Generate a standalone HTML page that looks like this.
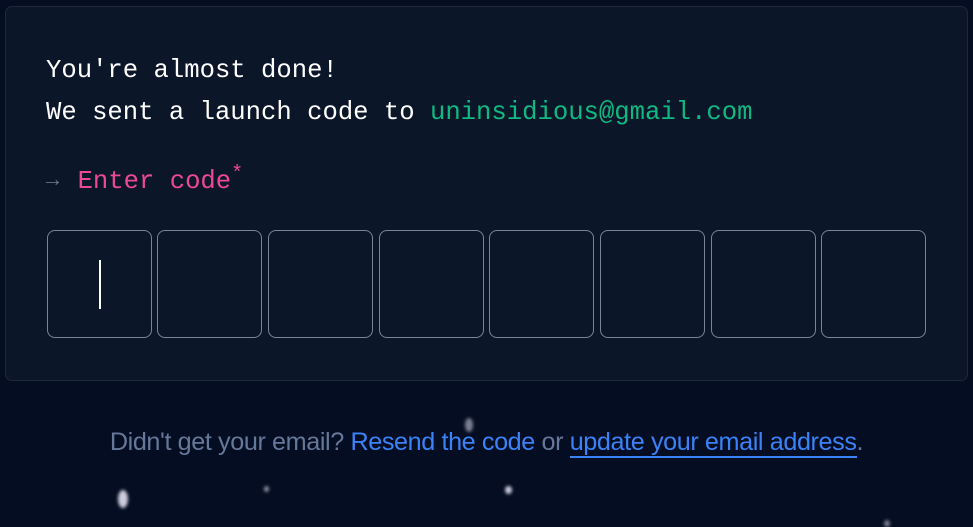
<!DOCTYPE html>
<html><head><style>
html,body{margin:0;padding:0;width:973px;height:527px;background:#050d22;overflow:hidden;position:relative}
.card{position:absolute;left:5px;top:6px;width:963px;height:375px;background:#0c1629;border:1px solid #1e293b;border-radius:7px;box-sizing:border-box}
.mono{font-family:"Liberation Mono",monospace;font-size:25.6px;position:absolute;left:46px;white-space:pre;color:#fff}
.box{position:absolute;top:230px;width:105px;height:108px;border:1px solid #7b8494;border-radius:8px;box-sizing:border-box}
.foot{position:absolute;top:428px;left:0;width:973px;text-align:center;font-family:"Liberation Sans",sans-serif;font-size:25.2px;color:#66789a;letter-spacing:-0.4px}
.foot a{color:#3b82f6;text-decoration:none}
.star{position:absolute;border-radius:50%;background:#ccd;filter:blur(1.5px)}
</style></head><body>
<div class="star" style="left:118px;top:490px;width:10px;height:18px"></div>
<div class="star" style="left:465px;top:418px;width:8px;height:14px;opacity:.6"></div>
<div class="star" style="left:264px;top:486px;width:5px;height:6px;opacity:.7"></div>
<div class="star" style="left:505px;top:486px;width:7px;height:8px"></div>
<div class="star" style="left:884px;top:520px;width:6px;height:7px;opacity:.6"></div>
<div class="card"></div>
<div class="mono" style="top:56px">You're almost done!</div>
<div class="mono" style="top:98px">We sent a launch code to <span style="color:#10b981">uninsidious@gmail.com</span></div>
<div class="mono" style="top:167px;color:#ec4899"><span style="color:#64748b;font-size:22px;position:relative;top:-2px">→</span>&nbsp;<span style="margin-left:3px">Enter code</span><span style="font-size:20px;position:relative;top:-9px">*</span></div>
<div class="box" style="left:47px"><div style="position:absolute;left:51px;top:29px;width:2px;height:49px;background:#fff"></div></div>
<div class="box" style="left:157px"></div>
<div class="box" style="left:268px"></div>
<div class="box" style="left:379px"></div>
<div class="box" style="left:489px"></div>
<div class="box" style="left:600px"></div>
<div class="box" style="left:711px"></div>
<div class="box" style="left:821px"></div>
<div class="foot">Didn't get your email? <a>Resend the code</a> or <a style="border-bottom:2px solid #3b82f6">update your email address</a>.</div>
</body></html>
